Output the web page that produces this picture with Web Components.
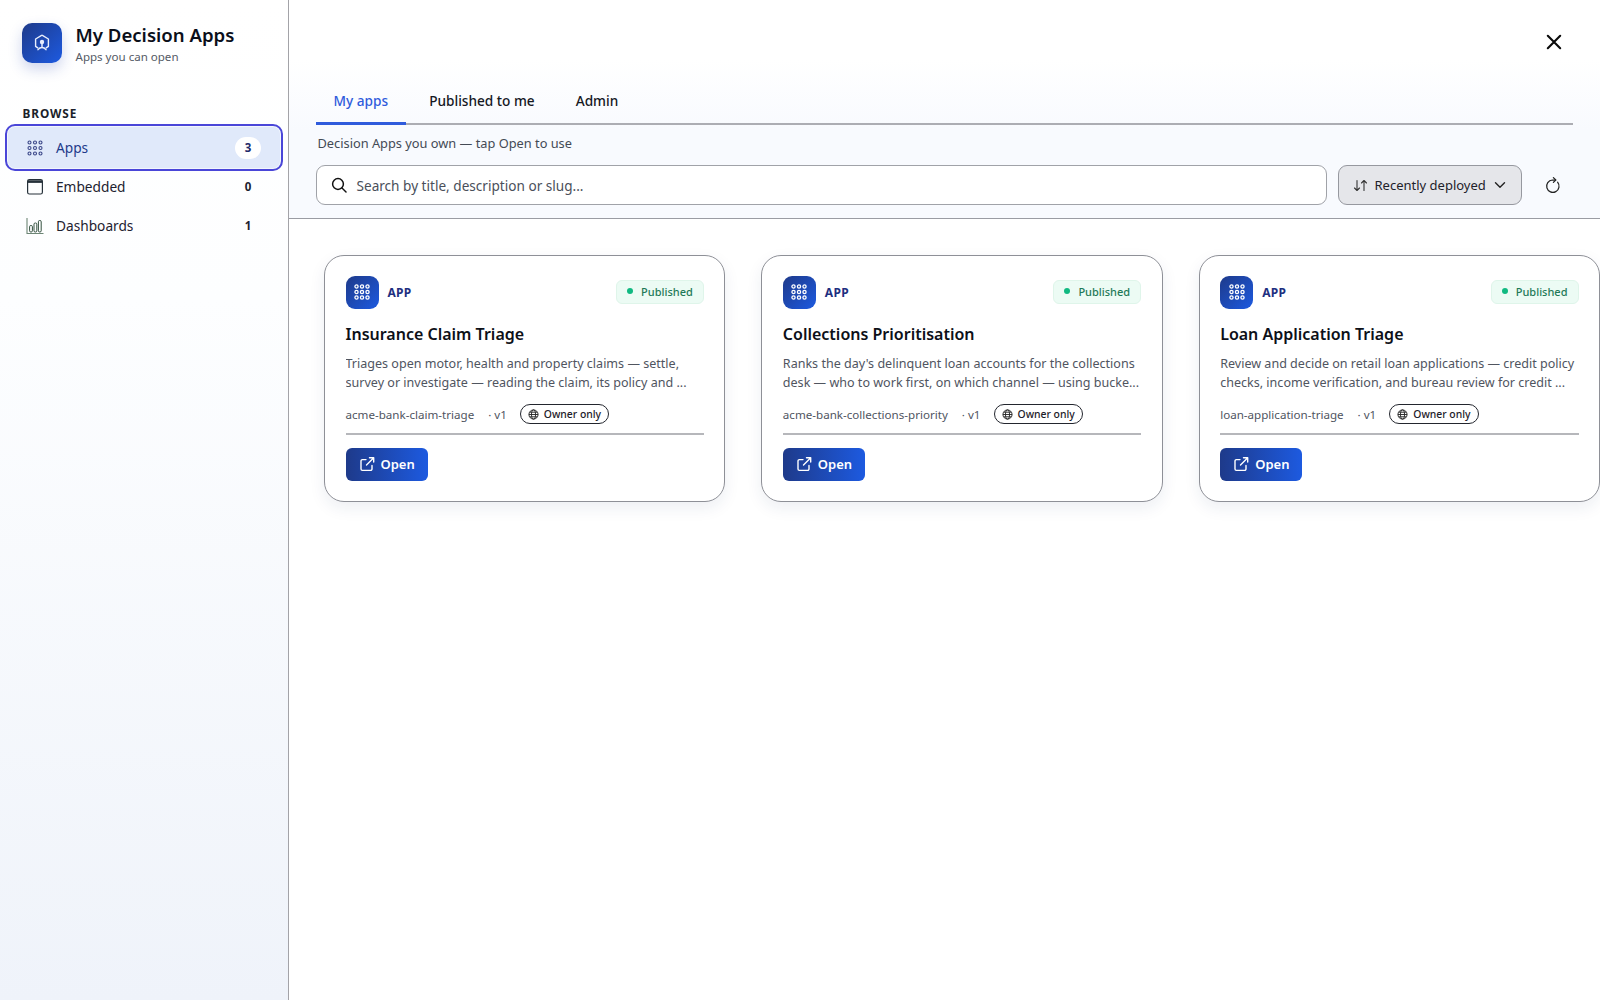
<!DOCTYPE html>
<html lang="en">
<head>
<meta charset="utf-8">
<title>My Decision Apps</title>
<style>
html,body{margin:0;height:100%;background:#fff}
body{font-family:"Noto Sans","Open Sans","Liberation Sans",sans-serif;color:#111827}
</style>
</head>
<body>
<template id="t-shell">
<style>
:host{display:grid;grid-template-columns:289px 1fr;height:1000px;width:1600px;overflow:hidden}
</style>
<slot name="side"></slot><slot name="main"></slot>
</template>

<template id="t-side">
<style>
:host{display:block;box-sizing:border-box;border-right:1px solid #a3a3a8;background:linear-gradient(180deg,#ffffff 0%,#fdfeff 30%,#eff3fa 100%);height:1000px;padding-top:23px}
.brand{display:flex;align-items:flex-start;gap:13.5px;padding-left:22px}
.logo{width:40px;height:40px;border-radius:10px;background:linear-gradient(135deg,#1e3a8a,#1d5ae0);box-shadow:0 6px 14px rgba(30,64,175,.22);display:flex;align-items:center;justify-content:center;flex:none}
h1{margin:0;font-size:18.6px;line-height:24px;font-weight:600;color:#0b0f1a}
p{margin:1px 0 0;font-size:11.55px;line-height:18px;color:#555b66}
.label{margin:39px 0 0 22.5px;font-size:11.8px;line-height:16px;font-weight:700;letter-spacing:.9px;color:#1b1f2a}
nav{margin:3px 5px 0 5px;display:flex;flex-direction:column}
</style>
<div class="brand">
  <div class="logo"><svg width="20" height="20" viewBox="0 0 20 20" fill="none" stroke="#e8eefc" stroke-width="1.4"><path d="M10 2.2 16.4 6v7.4L13.8 15.2M10 2.2 3.6 6v7.4L6.2 15.2" stroke-linejoin="round"/><circle cx="10" cy="9" r="2.2" fill="#e8eefc" stroke="none"/><path d="M10 11v3.4M6 16.6c1.4-1.8 2.8-2.2 4-2.2s2.6.4 4 2.2" stroke-width="1.5" stroke-linecap="round"/></svg></div>
  <div><h1>My Decision Apps</h1><p>Apps you can open</p></div>
</div>
<div class="label">BROWSE</div>
<nav><slot></slot></nav>
</template>

<template id="t-nav">
<style>
:host{display:block}
.row{box-sizing:border-box;display:flex;align-items:center;height:39px;padding:0 22px 0 21px;font-size:13.7px;color:#1d2230;gap:12px}
.ic{width:18px;height:18px;display:flex;flex:none;color:#1f2933}
.t{flex:1}
.n{min-width:26px;height:22px;line-height:22px;text-align:center;font-size:11.5px;font-weight:700;border-radius:11px;color:#1b2130}
:host([active]) .row{height:47px;border:2px solid #4a46d8;border-radius:10px;background:#e0e9fa;box-shadow:inset 0 0 0 1px #f2f6fd;color:#1e3a8a;padding:0 20px 0 19px;margin-bottom:-4px}
:host([active]) .n{background:#fff;color:#1e2a6a}
</style>
<div class="row"><span class="ic"><slot name="icon"></slot></span><span class="t"><slot></slot></span><span class="n" id="n"></span></div>
</template>

<template id="t-head">
<style>
:host{display:block;box-sizing:border-box;height:219px;border-bottom:1px solid #9a9ca3;padding:0 27px 0 27px;background:linear-gradient(180deg,#fff 0,#fff 60px,#f8fafe 130px,#f8fafe 100%)}
.close{height:84px;display:flex;align-items:center;justify-content:flex-end;padding-right:7px}
.sub{margin-top:8px;line-height:20px;font-size:12.8px;color:#444a55;padding-left:1.5px}
</style>
<div class="close"><svg width="24" height="24" viewBox="0 0 24 24" fill="none" stroke="#0b0b0b" stroke-width="2.1" stroke-linecap="round"><path d="M5.8 5.8 18.2 18.2M18.2 5.8 5.8 18.2"/></svg></div>
<slot name="tabs"></slot>
<div class="sub"><slot name="sub"></slot></div>
<slot name="tools"></slot>
</template>

<template id="t-tabs">
<style>
:host{display:flex;height:41px;border-bottom:2px solid #acadb3;box-sizing:border-box}
</style>
<slot></slot>
</template>

<template id="t-tab">
<style>
:host{display:flex;align-items:center;box-sizing:border-box;height:41px;padding:0 17.5px 5px;margin-right:6px;font-size:13.65px;font-weight:500;color:#15181f;border-bottom:3px solid transparent}
:host([active]){color:#2f5bdc;border-bottom-color:#2f5bdc}
</style>
<slot></slot>
</template>

<template id="t-tools">
<style>
:host{display:flex;margin-top:12px;height:40px;align-items:stretch}
.search{flex:1;box-sizing:border-box;border:1.5px solid #a0a2a8;border-radius:9px;background:#fff;display:flex;align-items:center;padding-left:13.5px;gap:10px;font-size:13.6px;color:#4a4f5a}
.sort{box-sizing:border-box;width:184px;margin-left:11px;border:1.5px solid #96989f;border-radius:9px;background:#e5e6ea;display:flex;align-items:center;padding-left:13.5px;font-size:13px;color:#1e222b}
.sort span{margin-left:7px;margin-right:8px}
.refresh{width:40px;margin-left:11px;display:flex;align-items:center;justify-content:center}
</style>
<div class="search"><svg width="16" height="16" viewBox="0 0 16 16" fill="none" stroke="#111" stroke-width="1.5" stroke-linecap="round"><circle cx="7" cy="7" r="5.4"/><path d="M11 11l4 4"/></svg><span>Search by title, description or slug...</span></div>
<div class="sort"><svg width="15" height="15" viewBox="0 0 15 15" fill="none" stroke="#333" stroke-width="1.1" stroke-linecap="round" stroke-linejoin="round"><path d="M4 2.5v10M1.5 10 4 12.5 6.5 10M11 12.5v-10M8.5 5 11 2.5 13.5 5"/></svg><span>Recently deployed</span><svg width="12" height="12" viewBox="0 0 12 12" fill="none" stroke="#222" stroke-width="1.4" stroke-linecap="round" stroke-linejoin="round"><path d="M1.5 3.8 6 8.2l4.5-4.4"/></svg></div>
<div class="refresh"><svg width="18" height="18" viewBox="0 0 18 18" fill="none" stroke="#222" stroke-width="1.25" stroke-linecap="round" stroke-linejoin="round"><path d="M13.6 6.2A6.2 6.2 0 1 1 8.4 4H11.6"/><path d="M9.4 1.6 11.8 4 9.4 6.4"/></svg></div>
</template>

<template id="t-grid">
<style>
:host{display:grid;grid-template-columns:repeat(3,1fr);gap:36px;padding:36px 0 0 35px}
</style>
<slot></slot>
</template>

<template id="t-card">
<style>
:host{display:block;box-sizing:border-box;height:247px;border:1.5px solid #8e9097;border-radius:20px;background:#fff;padding:19.5px 20.5px 0 20.5px;box-shadow:0 6px 16px rgba(30,50,100,.08);min-width:0}
.top{display:flex;align-items:center;height:33px}
.mark{width:33px;height:33px;border-radius:9px;background:linear-gradient(135deg,#1e3a8a,#1d5ae0);display:flex;align-items:center;justify-content:center}
.kind{margin-left:9px;font-size:12px;font-weight:700;letter-spacing:.3px;color:#1e2f80;flex:1}
.pub{display:flex;align-items:center;box-sizing:border-box;height:24px;padding:0 10px 1px 10px;border:1px solid #dff5ea;border-radius:6px;background:#ecfbf4;font-size:11px;font-weight:500;color:#1f7a58;gap:8px;margin-top:-1px}
.dot{width:6px;height:6px;border-radius:50%;background:#10b981}
h3{margin:13px 0 0;font-size:16px;line-height:24px;font-weight:600;color:#0d1018}
.desc{margin-top:8px;font-size:12.55px;line-height:19px;color:#50555f;white-space:nowrap;overflow:hidden}
.meta{display:flex;align-items:center;margin-top:12.5px;height:20px;font-size:11.6px;color:#50555f;white-space:nowrap}
.slug{margin-right:14px}
.owner{display:flex;align-items:center;gap:5px;box-sizing:border-box;height:20px;padding:0 7px 0 7px;margin-left:13px;border:1px solid #23262e;border-radius:10px;font-size:10.4px;font-weight:500;color:#1d2029}
hr{margin:8.5px 0 0;height:2px;border:0;background:#b6b7bb}
.open{margin-top:13px;width:max-content;box-sizing:border-box;height:33px;padding:0 13px;display:flex;align-items:center;gap:6px;border-radius:6px;background:linear-gradient(90deg,#1e3a8a,#1d5ae0);color:#fff;font-size:13px;font-weight:600}
</style>
<div class="top">
  <div class="mark"><svg width="18" height="18" viewBox="0 0 18 18" fill="none" stroke="#fff" stroke-width="1.3"><circle cx="3.5" cy="3.5" r="1.6"/><circle cx="9" cy="3.5" r="1.6"/><circle cx="14.5" cy="3.5" r="1.6"/><circle cx="3.5" cy="9" r="1.6"/><circle cx="9" cy="9" r="1.6"/><circle cx="14.5" cy="9" r="1.6"/><circle cx="3.5" cy="14.5" r="1.6"/><circle cx="9" cy="14.5" r="1.6"/><circle cx="14.5" cy="14.5" r="1.6"/></svg></div>
  <div class="kind">APP</div>
  <div class="pub"><i class="dot"></i>Published</div>
</div>
<h3><slot name="title"></slot></h3>
<div class="desc"><slot name="desc"></slot></div>
<div class="meta"><span class="slug"><slot name="slug"></slot></span><span>· v1</span>
<span class="owner"><svg width="11" height="11" viewBox="0 0 12 12" fill="none" stroke="#222" stroke-width="1"><circle cx="6" cy="6" r="5"/><ellipse cx="6" cy="6" rx="2.2" ry="5"/><path d="M1 6h10M1.8 3.5h8.4M1.8 8.5h8.4"/></svg>Owner only</span></div>
<hr>
<div class="open"><svg width="16" height="16" viewBox="0 0 16 16" fill="none" stroke="#fff" stroke-width="1.4" stroke-linecap="round" stroke-linejoin="round"><path d="M13 9.5V13a1.4 1.4 0 0 1-1.4 1.4H3.4A1.4 1.4 0 0 1 2 13V5A1.4 1.4 0 0 1 3.4 3.6H7M7.5 9 14.5 2M10.5 1.8h4.2V6"/></svg>Open</div>
</template>

<my-shell>
  <side-panel slot="side">
    <nav-item active count="3"><svg slot="icon" width="18" height="18" viewBox="0 0 18 18" fill="none" stroke="#3a4688" stroke-width="1.1"><circle cx="3.5" cy="3.5" r="1.5"/><circle cx="9" cy="3.5" r="1.5"/><circle cx="14.5" cy="3.5" r="1.5"/><circle cx="3.5" cy="9" r="1.5"/><circle cx="9" cy="9" r="1.5"/><circle cx="14.5" cy="9" r="1.5"/><circle cx="3.5" cy="14.5" r="1.5"/><circle cx="9" cy="14.5" r="1.5"/><circle cx="14.5" cy="14.5" r="1.5"/></svg>Apps</nav-item>
    <nav-item count="0"><svg slot="icon" width="18" height="18" viewBox="0 0 18 18" fill="none" stroke="#26313a" stroke-width="1.2"><rect x="1.6" y="1.6" width="14.8" height="14.4" rx="1.8"/><path d="M1.6 3.6h14.8" stroke-width="2.6"/></svg>Embedded</nav-item>
    <nav-item count="1"><svg slot="icon" width="18" height="18" viewBox="0 0 18 18" fill="none" stroke="#33503f" stroke-width="1"><path d="M1 1v15.5h16.5" stroke="#6d8676" stroke-width="1.1"/><rect x="3.6" y="8.5" width="2.8" height="6.5" rx="1.2"/><rect x="8" y="6" width="2.8" height="9" rx="1.2"/><rect x="12.4" y="3.5" width="2.8" height="11.5" rx="1.2"/></svg>Dashboards</nav-item>
  </side-panel>
  <main-panel slot="main">
    <main-head>
      <tab-bar slot="tabs"><tab-item active>My apps</tab-item><tab-item>Published to me</tab-item><tab-item>Admin</tab-item></tab-bar>
      <span slot="sub">Decision Apps you own — tap Open to use</span>
      <tool-bar slot="tools"></tool-bar>
    </main-head>
    <card-grid>
      <app-card><span slot="title">Insurance Claim Triage</span><span slot="desc">Triages open motor, health and property claims — settle,<br>survey or investigate — reading the claim, its policy and ...</span><span slot="slug">acme-bank-claim-triage</span></app-card>
      <app-card><span slot="title">Collections Prioritisation</span><span slot="desc">Ranks the day's delinquent loan accounts for the collections<br>desk — who to work first, on which channel — using bucke...</span><span slot="slug">acme-bank-collections-priority</span></app-card>
      <app-card><span slot="title">Loan Application Triage</span><span slot="desc">Review and decide on retail loan applications — credit policy<br>checks, income verification, and bureau review for credit ...</span><span slot="slug">loan-application-triage</span></app-card>
    </card-grid>
  </main-panel>
</my-shell>

<script>
function reg(name,tid,extra){
  customElements.define(name,class extends HTMLElement{
    constructor(){super();this.attachShadow({mode:'open'}).appendChild(document.getElementById(tid).content.cloneNode(true));}
    connectedCallback(){if(extra)extra(this);}
  });
}
reg('my-shell','t-shell');
reg('side-panel','t-side');
reg('nav-item','t-nav',el=>{el.shadowRoot.getElementById('n').textContent=el.getAttribute('count')||'';});
reg('main-head','t-head');
reg('tab-bar','t-tabs');
reg('tab-item','t-tab');
reg('tool-bar','t-tools');
reg('card-grid','t-grid');
reg('app-card','t-card');
customElements.define('main-panel',class extends HTMLElement{
  constructor(){super();const s=this.attachShadow({mode:'open'});s.innerHTML='<style>:host{display:block;min-width:0;background:#fff}</style><slot></slot>';}
});
</script>
</body>
</html>
